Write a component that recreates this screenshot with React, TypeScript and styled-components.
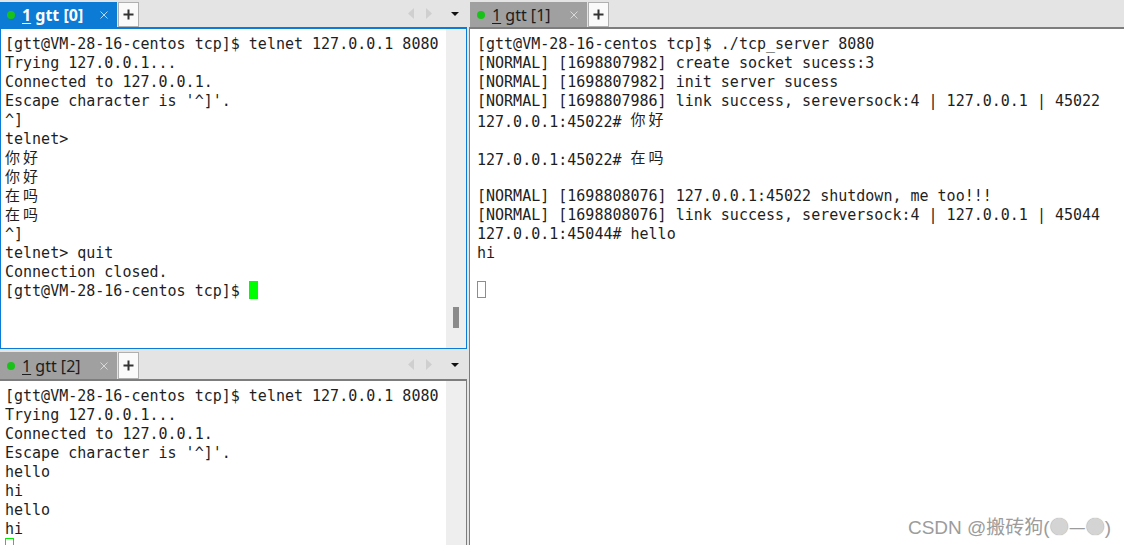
import styled, { createGlobalStyle } from 'styled-components'

const GlobalStyle = createGlobalStyle`
  html, body {
    margin: 0;
    padding: 0;
    overflow: hidden;
    background: #e4e4e4;
  }
`

const Screen = styled.div`
  position: relative;
  display: flex;
  width: 1124px;
  height: 545px;
  overflow: hidden;
  background: #e4e4e4;
  font-family: "Noto Sans", "Liberation Sans", sans-serif;
`

const LeftColumn = styled.div`
  display: flex;
  flex-direction: column;
  width: 467px;
  flex-shrink: 0;
`

const RightColumn = styled.div`
  display: flex;
  flex-direction: column;
  flex: 1;
  min-width: 0;
  margin-left: 2px;
`

const Pane = styled.section<{ $height?: number }>`
  display: flex;
  flex-direction: column;
  ${(p) => (p.$height ? `height: ${p.$height}px; flex-shrink: 0;` : 'flex: 1; min-height: 0;')}
`

const TabBar = styled.div<{ $height: number; $top: number; $line: string; $lineWidth: number; $indent?: number }>`
  display: flex;
  align-items: stretch;
  box-sizing: border-box;
  flex-shrink: 0;
  height: ${(p) => p.$height}px;
  padding-top: ${(p) => p.$top}px;
  padding-left: ${(p) => p.$indent ?? 0}px;
  border-bottom: ${(p) => p.$lineWidth}px solid ${(p) => p.$line};
`

const Tab = styled.div<{ $active?: boolean }>`
  display: flex;
  align-items: center;
  width: 117px;
  box-sizing: border-box;
  padding: 0 9px 0 7px;
  background: ${(p) => (p.$active ? '#0b7bd5' : '#a0a0a0')};
  color: ${(p) => (p.$active ? '#ffffff' : '#1c1c1c')};
  font-weight: ${(p) => (p.$active ? 700 : 400)};
  font-size: 16px;
`

const StatusDot = styled.span`
  width: 8px;
  height: 8px;
  border-radius: 50%;
  background: #19c219;
  margin-right: 7px;
  flex-shrink: 0;
`

const TabLabel = styled.span`
  white-space: nowrap;
`

const Hotkey = styled.span`
  text-decoration: underline;
  text-underline-offset: 2px;
`

const CloseMark = styled.svg`
  margin-left: auto;
  width: 8px;
  height: 8px;
`

const AddButton = styled.div`
  display: flex;
  align-items: center;
  justify-content: center;
  width: 21px;
  margin-left: 1px;
  box-sizing: border-box;
  background: #fafafa;
  border: 1px solid #b0b0b0;
`

const NavGroup = styled.div`
  display: flex;
  align-items: center;
  margin-left: auto;
  padding: 0 8px 2px 0;
`

const NavArrow = styled.svg<{ $gap: number }>`
  width: 6px;
  height: 11px;
  margin-right: ${(p) => p.$gap}px;
`

const DropArrow = styled.svg`
  width: 8px;
  height: 4px;
`

const TermBody = styled.div<{ $edge: 'focused' | 'left' | 'right' }>`
  flex: 1;
  min-height: 0;
  display: flex;
  overflow: hidden;
  background: #ffffff;
  ${(p) =>
    p.$edge === 'focused'
      ? 'border: 1px solid #0b7bd5;'
      : p.$edge === 'left'
        ? 'border-left: 1px solid #ffffff; border-right: 1px solid #7d7d7d;'
        : 'border-left: 1px solid #7d7d7d;'}
`

const Terminal = styled.div<{ $padLeft: number }>`
  flex: 1;
  min-width: 0;
  padding: 6px 0 0 ${(p) => p.$padLeft}px;
  font-family: "DejaVu Sans Mono", "Noto Sans CJK SC", monospace;
  font-size: 15px;
  line-height: 19px;
  color: #1e1e1e;
  white-space: pre;
  overflow: hidden;
`

const Line = styled.div`
  display: flex;
  height: 19px;
`

const Wide = styled.span`
  position: relative;
  top: -2px;
  font-family: "Noto Sans CJK SC", sans-serif;
  letter-spacing: 3px;
`

const Cursor = styled.span<{ $solid?: boolean }>`
  display: block;
  flex-shrink: 0;
  box-sizing: border-box;
  width: 9px;
  height: ${(p) => (p.$solid ? 18 : 17)}px;
  margin-top: -1px;
  background: ${(p) => (p.$solid ? '#00ff00' : '#ffffff')};
  box-shadow: ${(p) => (p.$solid ? 'none' : 'inset 0 0 0 1px #00f000')};
`

const ScrollTrack = styled.div<{ $bottom: number }>`
  display: flex;
  flex-direction: column;
  justify-content: flex-end;
  align-items: center;
  width: 20px;
  flex-shrink: 0;
  padding-bottom: ${(p) => p.$bottom}px;
  background: #eeeeee;
`

const ScrollThumb = styled.div`
  width: 6px;
  height: 21px;
  background: #8b8b8b;
`

const Watermark = styled.div`
  position: absolute;
  right: 13px;
  bottom: 6px;
  font-family: "Liberation Sans", "Noto Sans CJK SC", sans-serif;
  font-size: 19px;
  line-height: 22px;
  color: #9c9c9c;
  white-space: nowrap;
`

const Face = styled.span`
  font-family: "Noto Sans CJK SC", sans-serif;
`

const Ball = styled.span`
  color: #d4d4d4;
  text-shadow: 0 0 1px #8a8a8a;
`

const CJK = /([\u4e00-\u9fff]+)/

const renderText = (text: string) =>
  text.split(CJK).map((part, i) => (CJK.test(part) ? <Wide key={i}>{part}</Wide> : part))

type TabInfo = { index: number; active?: boolean }

const TabStrip = ({ index, active }: TabInfo) => (
  <>
    <Tab $active={active}>
      <StatusDot />
      <TabLabel>
        <Hotkey>1</Hotkey> gtt [{index}]
      </TabLabel>
      <CloseMark viewBox="0 0 8 8">
        <path
          d="M0.5 0.5 L7.5 7.5 M7.5 0.5 L0.5 7.5"
          stroke={active ? 'rgba(255,255,255,0.7)' : '#d8d8d8'}
          strokeWidth="1"
        />
      </CloseMark>
    </Tab>
    <AddButton>
      <svg width="11" height="11" viewBox="0 0 11 11">
        <path d="M5.5 0.5 V10.5 M0.5 5.5 H10.5" stroke="#333" strokeWidth="2" />
      </svg>
    </AddButton>
  </>
)

const Navigator = () => (
  <NavGroup>
    <NavArrow $gap={12} viewBox="0 0 6 11">
      <path d="M6 0 L0 5.5 L6 11 Z" fill="#cfcfcf" />
    </NavArrow>
    <NavArrow $gap={19} viewBox="0 0 6 11">
      <path d="M0 0 L6 5.5 L0 11 Z" fill="#cfcfcf" />
    </NavArrow>
    <DropArrow viewBox="0 0 8 4">
      <path d="M0 0 H8 L4 4 Z" fill="#111" />
    </DropArrow>
  </NavGroup>
)

type TermProps = { lines: string[]; cursor: 'solid' | 'hollow'; padLeft: number }

const TerminalView = ({ lines, cursor, padLeft }: TermProps) => (
  <Terminal $padLeft={padLeft}>
    {lines.map((text, i) => (
      <Line key={i}>
        <span>{renderText(text)}</span>
        {i === lines.length - 1 && <Cursor $solid={cursor === 'solid'} />}
      </Line>
    ))}
  </Terminal>
)

const prompt = '[gtt@VM-28-16-centos tcp]$ '

const topLeftLines = [
  prompt + 'telnet 127.0.0.1 8080',
  'Trying 127.0.0.1...',
  'Connected to 127.0.0.1.',
  "Escape character is '^]'.",
  '^]',
  'telnet>',
  '你好',
  '你好',
  '在吗',
  '在吗',
  '^]',
  'telnet> quit',
  'Connection closed.',
  prompt,
]

const bottomLeftLines = [
  prompt + 'telnet 127.0.0.1 8080',
  'Trying 127.0.0.1...',
  'Connected to 127.0.0.1.',
  "Escape character is '^]'.",
  'hello',
  'hi',
  'hello',
  'hi',
  '',
]

const serverLines = [
  prompt + './tcp_server 8080',
  '[NORMAL] [1698807982] create socket sucess:3',
  '[NORMAL] [1698807982] init server sucess',
  '[NORMAL] [1698807986] link success, sereversock:4 | 127.0.0.1 | 45022',
  '127.0.0.1:45022# 你好',
  '',
  '127.0.0.1:45022# 在吗',
  '',
  '[NORMAL] [1698808076] 127.0.0.1:45022 shutdown, me too!!!',
  '[NORMAL] [1698808076] link success, sereversock:4 | 127.0.0.1 | 45044',
  '127.0.0.1:45044# hello',
  'hi',
  '',
  '',
]

export default function App() {
  return (
    <>
      <GlobalStyle />
      <Screen>
        <LeftColumn>
          <Pane $height={349}>
            <TabBar $height={28} $top={2} $line="#0b7bd5" $lineWidth={1}>
              <TabStrip index={0} active />
              <Navigator />
            </TabBar>
            <TermBody $edge="focused">
              <TerminalView lines={topLeftLines} cursor="solid" padLeft={4} />
              <ScrollTrack $bottom={20}>
                <ScrollThumb />
              </ScrollTrack>
            </TermBody>
          </Pane>
          <Pane>
            <TabBar $height={32} $top={3} $line="#7d7d7d" $lineWidth={2}>
              <TabStrip index={2} />
              <Navigator />
            </TabBar>
            <TermBody $edge="left">
              <TerminalView lines={bottomLeftLines} cursor="hollow" padLeft={4} />
              <ScrollTrack $bottom={0} />
            </TermBody>
          </Pane>
        </LeftColumn>
        <RightColumn>
          <Pane>
            <TabBar $height={29} $top={2} $line="#7d7d7d" $lineWidth={2} $indent={1}>
              <TabStrip index={1} />
            </TabBar>
            <TermBody $edge="right">
              <TerminalView lines={serverLines} cursor="hollow" padLeft={7} />
            </TermBody>
          </Pane>
        </RightColumn>
        <Watermark>
          CSDN @搬砖狗(
          <Face>
            <Ball>●</Ball>—<Ball>●</Ball>
          </Face>
          )
        </Watermark>
      </Screen>
    </>
  )
}
